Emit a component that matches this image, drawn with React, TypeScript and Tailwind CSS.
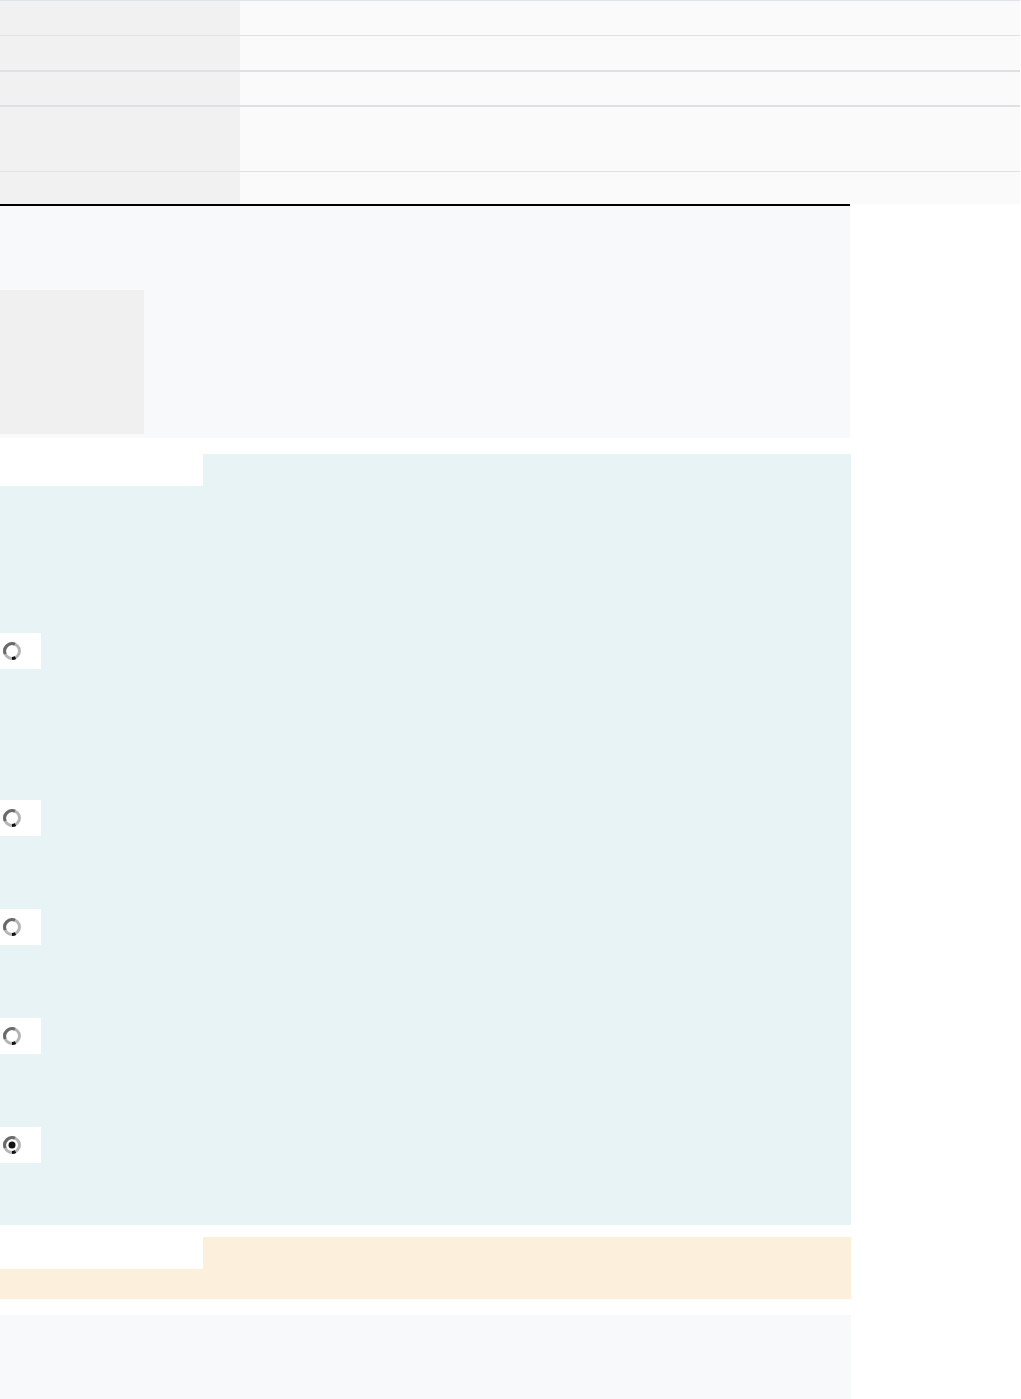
import React from "react";

type Row = { h: string; border: string };

const rows: Row[] = [
  { h: "h-[35px]", border: "border-t border-[#dfe2e6]" },
  { h: "h-[35px]", border: "border-t border-[#e0e0e0]" },
  { h: "h-[35px]", border: "border-t-2 border-[#dde1e5]" },
  { h: "h-[66px]", border: "border-t-2 border-[#dde1e5]" },
  { h: "h-[33px]", border: "border-t border-[#e0e0e0]" },
];

const Radio = ({ checked }: { checked?: boolean }) => (
  <div className="flex h-[36px] w-[41px] items-center bg-white pl-[2px]">
    <svg width="20" height="20" viewBox="0 0 20 20">
      <circle cx="10" cy="10" r="7.5" fill="white" stroke="#b5b5b5" strokeWidth="3" />
      <path d="M3.2 13 A7.5 7.5 0 0 1 13 3.2" fill="none" stroke="#6a6a6a" strokeWidth="3" />
      <path d="M10 17.5 A7.5 7.5 0 0 0 13.5 16.6" fill="none" stroke="#111" strokeWidth="3" />
      {checked && <circle cx="10" cy="10" r="3.5" fill="#111" />}
    </svg>
  </div>
);

export default function App() {
  return (
    <div className="min-h-[1399px] bg-white font-['Liberation_Sans',sans-serif] text-transparent">
      {/* info table */}
      <div className="w-[1020px]">
        {rows.map((r, i) => (
          <div key={i} className={`flex ${r.h} ${r.border}`}>
            <div className="w-[240px] bg-[#f1f1f1]" />
            <div className="flex-1 bg-[#fafafa]" />
          </div>
        ))}
      </div>

      <div className="w-[851px]">
        {/* intro block */}
        <div className="h-[234px] w-[850px] border-t-2 border-black bg-[#f8f9fa] pt-[84px]">
          <div className="h-[144px] w-[144px] bg-[#f0f0f0]" />
        </div>

        {/* question block */}
        <div className="mt-[16px]">
          <div className="ml-[203px] h-[32px] bg-[#e7f3f5]" />
          <div className="bg-[#e7f3f5] pb-[62px] pt-[147px]">
            <Radio />
            <div className="mt-[131px]">
              <Radio />
            </div>
            <div className="mt-[73px]">
              <Radio />
            </div>
            <div className="mt-[73px]">
              <Radio />
            </div>
            <div className="mt-[73px]">
              <Radio checked />
            </div>
          </div>
        </div>

        {/* note block */}
        <div className="mt-[12px]">
          <div className="ml-[203px] h-[32px] bg-[#fcefdc]" />
          <div className="h-[30px] bg-[#fcefdc]" />
        </div>

        {/* footer block */}
        <div className="mt-[16px] h-[84px] bg-[#f8f9fa]" />
      </div>
    </div>
  );
}
